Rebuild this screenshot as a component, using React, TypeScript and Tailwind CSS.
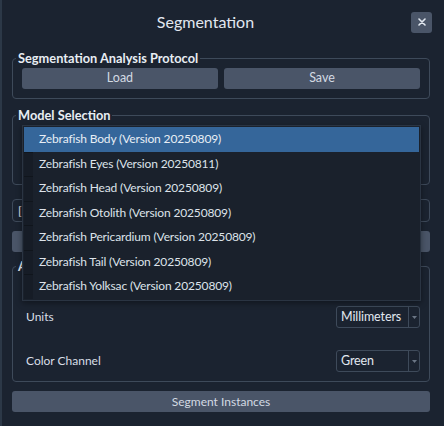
import { useState } from 'react';

const MODELS = [
  'Zebrafish Body (Version 20250809)',
  'Zebrafish Eyes (Version 20250811)',
  'Zebrafish Head (Version 20250809)',
  'Zebrafish Otolith (Version 20250809)',
  'Zebrafish Pericardium (Version 20250809)',
  'Zebrafish Tail (Version 20250809)',
  'Zebrafish Yolksac (Version 20250809)',
];

function Caret() {
  return (
    <svg className="w-[5px] h-[3px]" viewBox="0 0 5 3">
      <path d="M0 0h5L2.5 3z" fill="#6b7685" />
    </svg>
  );
}

function SmallSelect({ value }: { value: string }) {
  return (
    <div className="flex h-[22px] w-[84px] border border-[#3e4a5a] rounded-[3px] text-[12.5px] tracking-[-0.1px] text-[#e2e8f0]">
      <div className="flex-1 flex items-center pl-[4px]">{value}</div>
      <div className="w-[11px] border-l border-[#3e4a5a] flex items-center justify-center">
        <Caret />
      </div>
    </div>
  );
}

export default function App() {
  const [selected] = useState(0);

  return (
    <div
      className="relative w-[444px] h-[426px] overflow-hidden bg-[#1b2330] border-l-2 border-[#2c3847] text-[#e2e8f0]"
      style={{ fontFamily: 'Lato, "Noto Sans", sans-serif' }}
    >
      {/* Header */}
      <div className="flex items-center h-[44px]">
        <div className="flex-1 text-center text-[16px] text-[#e2e8f0]">Segmentation</div>
        <button
          type="button"
          className="w-[21px] h-[21px] mr-[12px] ml-[2px] rounded-[3px] bg-[#4a5568] flex items-center justify-center"
        >
          <svg className="w-[8px] h-[8px]" viewBox="0 0 8 8">
            <path d="M1 1l6 6M7 1L1 7" stroke="#e2e8f0" strokeWidth={1.6} strokeLinecap="round" />
          </svg>
        </button>
      </div>

      <div className="pl-[10px] pr-[14px]">
        {/* Protocol */}
        <fieldset className="mt-[6px] border border-[#3e4a5a] rounded-[4px] px-[9px] pb-[9px]">
          <legend className="-ml-[6px] px-[2px] text-[12.8px] leading-[16px] font-bold text-[#e8edf3]">
            Segmentation Analysis Protocol
          </legend>
          <div className="flex gap-[6px] mt-[2px]">
            <button type="button" className="flex-1 h-[21px] rounded-[3px] bg-[#4a5568] text-[12.5px] text-[#d3dae3]">
              Load
            </button>
            <button type="button" className="flex-1 h-[21px] rounded-[3px] bg-[#4a5568] text-[12.5px] text-[#d3dae3]">
              Save
            </button>
          </div>
        </fieldset>

        {/* Model selection */}
        <fieldset className="mt-[8px] border border-[#3e4a5a] rounded-[4px] px-[9px]">
          <legend className="-ml-[6px] px-[2px] text-[12.8px] leading-[16px] font-bold text-[#e8edf3]">
            Model Selection
          </legend>
          <div className="h-[61px] pt-[3px]">
            <div className="h-[22px] border border-[#3e4a5a] rounded-[3px]" />
          </div>
        </fieldset>

        <div className="mt-[14px] h-[23px] border border-[#3e4a5a] rounded-[4px] pl-[5px] text-[12px] leading-[21px]">
          [ ]
        </div>
        <button type="button" className="mt-[9px] w-full h-[21px] rounded-[3px] bg-[#4a5568] text-[12px]" />

        {/* Advanced */}
        <fieldset className="mt-0 border border-[#3e4a5a] rounded-[4px] px-[9px] pb-[9px]">
          <legend className="-ml-[6px] px-[2px] text-[12.8px] leading-[16px] font-bold text-[#e8edf3]">
            Advanced Options
          </legend>
          <div className="pt-[32px] flex flex-col gap-[22px]">
            <div className="flex items-center justify-between h-[22px]">
              <span className="pl-[4px] text-[12px] text-[#d8dee6]">Units</span>
              <SmallSelect value="Millimeters" />
            </div>
            <div className="flex items-center justify-between h-[22px]">
              <span className="pl-[4px] text-[12px] text-[#d8dee6]">Color Channel</span>
              <SmallSelect value="Green" />
            </div>
          </div>
        </fieldset>

        <button
          type="button"
          className="mt-[9px] w-full h-[21px] rounded-[3px] bg-[#4a5568] text-[12px] text-[#d3dae3]"
        >
          Segment Instances
        </button>
      </div>

      {/* Open model dropdown */}
      <div className="absolute left-[20px] top-[125px] w-[399px] bg-[#1a212c] border border-[#2a3442] p-[1px] shadow-[0_2px_6px_rgba(0,0,0,0.4)]">
        {MODELS.map((m, i) => (
          <div
            key={m}
            className={`flex items-center h-[24.5px] text-[12px] tracking-[-0.15px] ${
              i === selected ? 'bg-[#35669a] text-[#e8eef5]' : 'text-[#dde3ea]'
            }`}
          >
            <div
              className={`w-[9px] h-full ${
                i === selected ? '' : 'bg-[#161c26] border-t border-[#10151c]'
              }`}
            />
            <span className="pl-[6px]">{m}</span>
          </div>
        ))}
      </div>
    </div>
  );
}
